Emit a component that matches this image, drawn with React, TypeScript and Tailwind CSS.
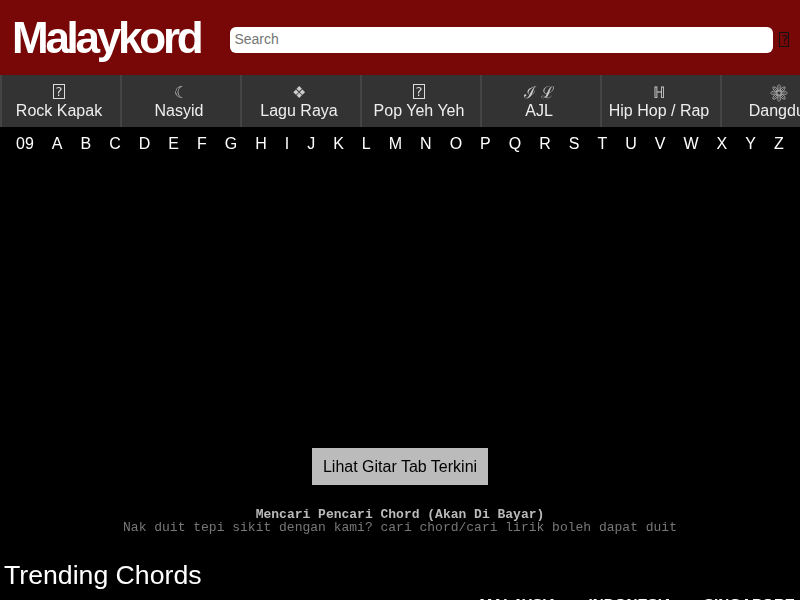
import React from "react";

const Tofu = ({ className }: { className: string }) => (
  <span className={`flex h-[15px] items-center justify-center border font-['DejaVu_Sans',sans-serif] text-[13px] leading-none ${className}`}>
    ?
  </span>
);

const Flower = () => (
  <svg width="18" height="18" viewBox="-9 -9 18 18" fill="none" stroke="#aaa" strokeWidth="0.8">
    {[0, 45, 90, 135, 180, 225, 270, 315].map((a) => (
      <g key={a} transform={`rotate(${a})`}>
        <path d="M0 -2 C-2.6 -4 -2 -7 0 -8.6 C2 -7 2.6 -4 0 -2Z" />
        <path d="M0 -2.5V-6.5" />
      </g>
    ))}
    <circle r="2" />
  </svg>
);

const genres: { icon: React.ReactNode; label: string }[] = [
  { icon: <Tofu className="mb-[2px] w-3 border-[#ddd] text-[#ddd]" />, label: "Rock Kapak" },
  { icon: <span className="ml-[3px]">☾</span>, label: "Nasyid" },
  { icon: "❖", label: "Lagu Raya" },
  { icon: <Tofu className="mb-[2px] w-3 border-[#ddd] text-[#ddd]" />, label: "Pop Yeh Yeh" },
  { icon: "ℐ ℒ", label: "AJL" },
  { icon: "ℍ", label: "Hip Hop / Rap" },
  { icon: <Flower />, label: "Dangdut" },
];

const letters = ["09", ..."ABCDEFGHIJKLMNOPQRSTUVWXYZ".split("")];

export default function App() {
  return (
    <div className="h-[600px] w-full overflow-hidden bg-black font-['Liberation_Sans',sans-serif] text-white">
      <header className="flex h-[75px] items-center bg-[#780808]">
        <a className="ml-3 transform-gpu text-[44px] leading-none font-bold tracking-[-3.25px] text-white">Malaykord</a>
        <input
          placeholder="Search"
          className="mt-[5px] ml-[30px] h-[26px] w-[543px] rounded-md bg-white px-[4px] pb-[2px] text-sm text-black placeholder:text-[#757575]"
        />
        <Tofu className="mt-[3px] ml-[6px] w-[10px] border-[#111] text-[#111]" />
      </header>

      <nav className="flex h-[52px] overflow-hidden bg-[#333]">
        {genres.map((g) => (
          <a
            key={g.label}
            className="flex w-[120px] shrink-0 flex-col items-center border-l-2 border-[#444] pt-[8px] pr-1 text-[16px] leading-[18px] text-[#eee]"
          >
            <span className="flex h-[19px] transform-gpu items-center text-[16px] leading-[18px] text-[#ccc]">{g.icon}</span>
            <span className="transform-gpu whitespace-nowrap">{g.label}</span>
          </a>
        ))}
      </nav>

      <div className="flex h-[33px] transform-gpu items-center gap-[18px] pl-4 text-[16px]">
        {letters.map((l) => (
          <a key={l}>{l}</a>
        ))}
      </div>

      <div className="mt-[288px] flex justify-center">
        <button className="h-[37px] w-[176px] bg-[#bbb] text-[16px] text-black">
          <span className="inline-block transform-gpu">Lihat Gitar Tab Terkini</span>
        </button>
      </div>

      <div className="mt-[23px] transform-gpu text-center font-['Liberation_Mono',monospace] text-[13px] leading-[13px]">
        <div className="font-bold text-[#bbb]">Mencari Pencari Chord (Akan Di Bayar)</div>
        <div className="text-[#777]">Nak duit tepi sikit dengan kami? cari chord/cari lirik boleh dapat duit</div>
      </div>

      <h2 className="mt-[25px] transform-gpu pl-1 text-[26.67px] leading-8 text-white">Trending Chords</h2>

      <div className="mt-[4px] flex transform-gpu justify-end gap-[31px] pr-[5px] text-[15.2px] leading-[18px] font-bold">
        <span>MALAYSIA</span>
        <span>INDONESIA</span>
        <span>SINGAPORE</span>
      </div>
    </div>
  );
}
